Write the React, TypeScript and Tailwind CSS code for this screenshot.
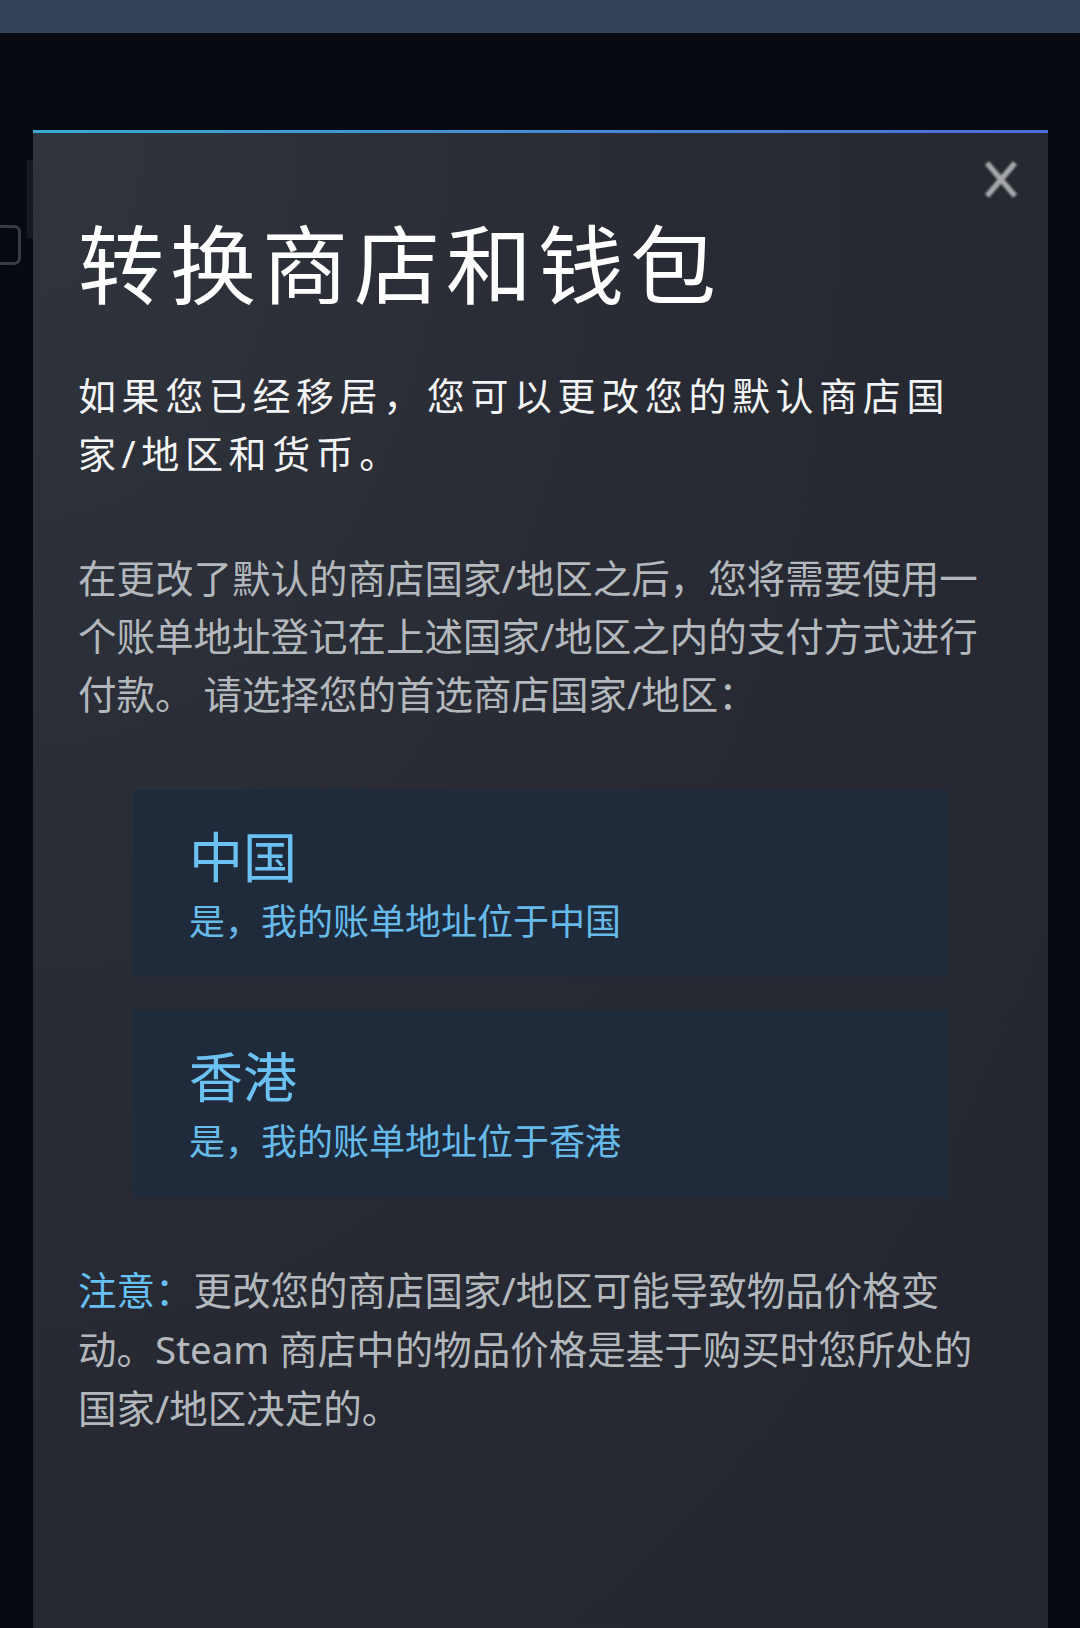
import type { ReactNode } from 'react';

const stores = [
  { name: '中国', note: '是，我的账单地址位于中国' },
  { name: '香港', note: '是，我的账单地址位于香港' },
];

function StoreOption({ name, note }: { name: string; note: string }) {
  return (
    <button
      type="button"
      className="flex flex-col items-start w-full text-left bg-[#1f2b3b] pt-[35px] pb-[31px] pl-[56px]"
    >
      <span className="text-[54px] leading-[64px] text-[#6bc1f2]">{name}</span>
      <span className="mt-[9px] text-[36px] leading-[48px] text-[#66bbeb]">{note}</span>
    </button>
  );
}

function CloseIcon() {
  return (
    <svg viewBox="0 0 38 39" className="w-[38px] h-[39px] blur-[0.8px]" fill="none">
      <path d="M5 3 L33 36 M33 3 L5 36" stroke="#a8a9ac" strokeWidth="5.5" strokeLinecap="butt" />
    </svg>
  );
}

function Paragraph({ className, children }: { className: string; children: ReactNode }) {
  return <p className={`w-[905px] ${className}`}>{children}</p>;
}

export default function App() {
  return (
    <div className="relative w-[1080px] h-[1628px] overflow-hidden bg-[#070b11] font-['Noto_Sans','Noto_Sans_CJK_SC',sans-serif]">
      {/* Page behind the modal */}
      <div className="h-[33px] bg-[#344258]" />
      <div className="flex items-start pt-[127px]">
        <div className="mt-[65px] -ml-[12px] w-[33px] h-[40px] rounded-[7px] border-[3px] border-[#383c43]" />
        <div className="ml-[6px] w-[12px] h-[78px] bg-[#16191e]" />
      </div>

      {/* Modal */}
      <div className="absolute left-[33px] top-[130px] w-[1015px] h-[1498px] flex flex-col">
        <div className="h-[3px] bg-linear-to-r from-[#38a9d3] to-[#4b6dd7]" />
        <div className="relative flex-1 pl-[45px] pt-[82px] bg-[radial-gradient(ellipse_at_top_left,#30343c_0%,#282b33_45%,#23262e_100%)]">
          <button type="button" className="absolute top-[27px] right-[28px]">
            <CloseIcon />
          </button>

          <h1 className="text-[86px] leading-[100px] tracking-[6px] text-white font-normal">
            转换商店和钱包
          </h1>

          <Paragraph className="mt-[51px] text-[38px] leading-[58px] tracking-[5.6px] text-[#f3f4f5]">
            如果您已经移居，您可以更改您的默认商店国家/地区和货币。
          </Paragraph>

          <Paragraph className="mt-[67px] text-[38.5px] leading-[58px] text-[#b3b8bd]">
            在更改了默认的商店国家/地区之后，您将需要使用一个账单地址登记在上述国家/地区之内的支付方式进行付款。 请选择您的首选商店国家/地区：
          </Paragraph>

          <div className="mt-[67px] ml-[55px] w-[815px] flex flex-col gap-[33px]">
            {stores.map((s) => (
              <StoreOption key={s.name} name={s.name} note={s.note} />
            ))}
          </div>

          <Paragraph className="mt-[64px] text-[38.5px] leading-[59px] text-[#b3b8bd]">
            <span className="text-[#66c0f4]">注意：</span>更改您的商店国家/地区可能导致物品价格变动。Steam 商店中的物品价格是基于购买时您所处的国家/地区决定的。
          </Paragraph>
        </div>
      </div>
    </div>
  );
}
